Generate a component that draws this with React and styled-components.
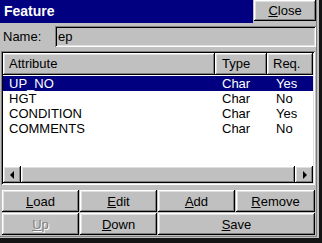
import React from "react";
import styled, { createGlobalStyle, css } from "styled-components";

const GlobalStyle = createGlobalStyle`
  html, body {
    margin: 0;
    padding: 0;
    background: #c0c0c0;
  }
  body {
    font-family: "Liberation Sans", Arial, sans-serif;
    font-size: 13px;
    color: #000;
  }
`;

const raised = css`
  background: #c0c0c0;
  box-shadow: inset -1px -1px #000, inset 1px 1px #fff, inset -2px -2px #808080, inset 2px 2px #dfdfdf;
`;

const sunken = css`
  box-shadow: inset 1px 1px #808080, inset -1px -1px #fff, inset 2px 2px #000, inset -2px -2px #dfdfdf;
`;

const Frame = styled.div`
  box-sizing: border-box;
  width: 322px;
  height: 243px;
  padding: 0 2px 1px 0;
  border-right: 3px solid #141414;
  border-bottom: 5px solid #141414;
  background: #c0c0c0;
`;

const Body = styled.div`
  box-sizing: border-box;
  height: 237px;
  border-right: 1px solid #808080;
  border-bottom: 1px solid #808080;
  display: flex;
  flex-direction: column;
`;

const TitleBar = styled.div`
  display: flex;
  align-items: flex-start;
  height: 23px;
`;

const Title = styled.div`
  flex: 0 0 253px;
  height: 23px;
  box-sizing: border-box;
  padding-left: 4px;
  background: #000080;
  color: #fff;
  font-weight: bold;
  font-size: 14px;
  line-height: 23px;
`;

const Button = styled.button`
  ${raised};
  border: none;
  margin: 0;
  padding: 0;
  font: inherit;
  color: ${p => (p.disabled ? "#808080" : "#000")};
  text-shadow: ${p => (p.disabled ? "1px 1px #fff" : "none")};
  display: flex;
  align-items: center;
  justify-content: center;
  u {
    text-decoration: underline;
    text-underline-offset: 1px;
  }
`;

const CloseButton = styled(Button)`
  width: 62px;
  height: 21px;
  margin: 0 0 0 auto;
`;

const NameRow = styled.div`
  display: flex;
  align-items: center;
  margin-top: 3px;
  height: 21px;
`;

const Label = styled.div`
  flex: 0 0 52px;
  padding-left: 3px;
`;

const TextField = styled.div`
  ${sunken};
  flex: 1;
  height: 21px;
  box-sizing: border-box;
  padding-left: 3px;
  line-height: 21px;
`;

const ListBox = styled.div`
  ${sunken};
  background: #fff;
  margin: 4px 1px 0 1px;
  height: 134px;
  box-sizing: border-box;
  padding: 2px;
  display: flex;
  flex-direction: column;
`;

const columns = "212px 52px 46px";

const HeaderRow = styled.div`
  display: grid;
  grid-template-columns: ${columns};
  height: 22px;
  background: #c0c0c0;
`;

const HeaderCell = styled.div`
  ${raised};
  padding-left: ${p => p.$pad}px;
  line-height: 22px;
`;

const Rows = styled.div`
  flex: 1;
  padding-top: 1px;
`;

const Row = styled.div`
  display: grid;
  grid-template-columns: ${columns};
  height: 15px;
  line-height: 15px;
  background: ${p => (p.$selected ? "#000080" : "transparent")};
  color: ${p => (p.$selected ? "#fff" : "#000")};
`;

const Cell = styled.div`
  padding-left: ${p => p.$pad}px;
`;

const ScrollBar = styled.div`
  display: flex;
  height: 17px;
  background: #c0c0c0;
`;

const ArrowButton = styled.div`
  ${raised};
  flex: 0 0 18px;
  display: flex;
  align-items: center;
  justify-content: center;
`;

const Arrow = styled.span`
  width: 0;
  height: 0;
  border-top: 4px solid transparent;
  border-bottom: 4px solid transparent;
  ${p =>
    p.$dir === "left"
      ? css`border-right: 4px solid #000; margin-right: 1px;`
      : css`border-left: 4px solid #000; margin-left: 1px;`}
`;

const Thumb = styled.div`
  ${raised};
  flex: 1;
`;

const ButtonGrid = styled.div`
  display: grid;
  grid-template-columns: 77px 77px 77px 1fr;
  grid-auto-rows: 22px;
  column-gap: 1px;
  row-gap: 1px;
  margin: 5px 1px 0 2px;
`;

const WideButton = styled(Button)`
  grid-column: span 2;
`;

const attributes = [
  { name: "UP_NO", type: "Char", req: "Yes" },
  { name: "HGT", type: "Char", req: "No" },
  { name: "CONDITION", type: "Char", req: "Yes" },
  { name: "COMMENTS", type: "Char", req: "No" }
];

export default function App() {
  return (
    <>
      <GlobalStyle />
      <Frame>
        <Body>
          <TitleBar>
            <Title>Feature</Title>
            <CloseButton><u>C</u>lose</CloseButton>
          </TitleBar>
          <NameRow>
            <Label>Name:</Label>
            <TextField>ep</TextField>
          </NameRow>
          <ListBox>
            <HeaderRow>
              <HeaderCell $pad={6}>Attribute</HeaderCell>
              <HeaderCell $pad={7}>Type</HeaderCell>
              <HeaderCell $pad={6}>Req.</HeaderCell>
            </HeaderRow>
            <Rows>
              {attributes.map((a, i) => (
                <Row key={a.name} $selected={i === 0}>
                  <Cell $pad={6}>{a.name}</Cell>
                  <Cell $pad={7}>{a.type}</Cell>
                  <Cell $pad={9}>{a.req}</Cell>
                </Row>
              ))}
            </Rows>
            <ScrollBar>
              <ArrowButton><Arrow $dir="left" /></ArrowButton>
              <Thumb />
              <ArrowButton><Arrow $dir="right" /></ArrowButton>
            </ScrollBar>
          </ListBox>
          <ButtonGrid>
            <Button><u>L</u>oad</Button>
            <Button><u>E</u>dit</Button>
            <Button><u>A</u>dd</Button>
            <Button><u>R</u>emove</Button>
            <Button disabled><u>U</u>p</Button>
            <Button><u>D</u>own</Button>
            <WideButton><u>S</u>ave</WideButton>
          </ButtonGrid>
        </Body>
      </Frame>
    </>
  );
}
